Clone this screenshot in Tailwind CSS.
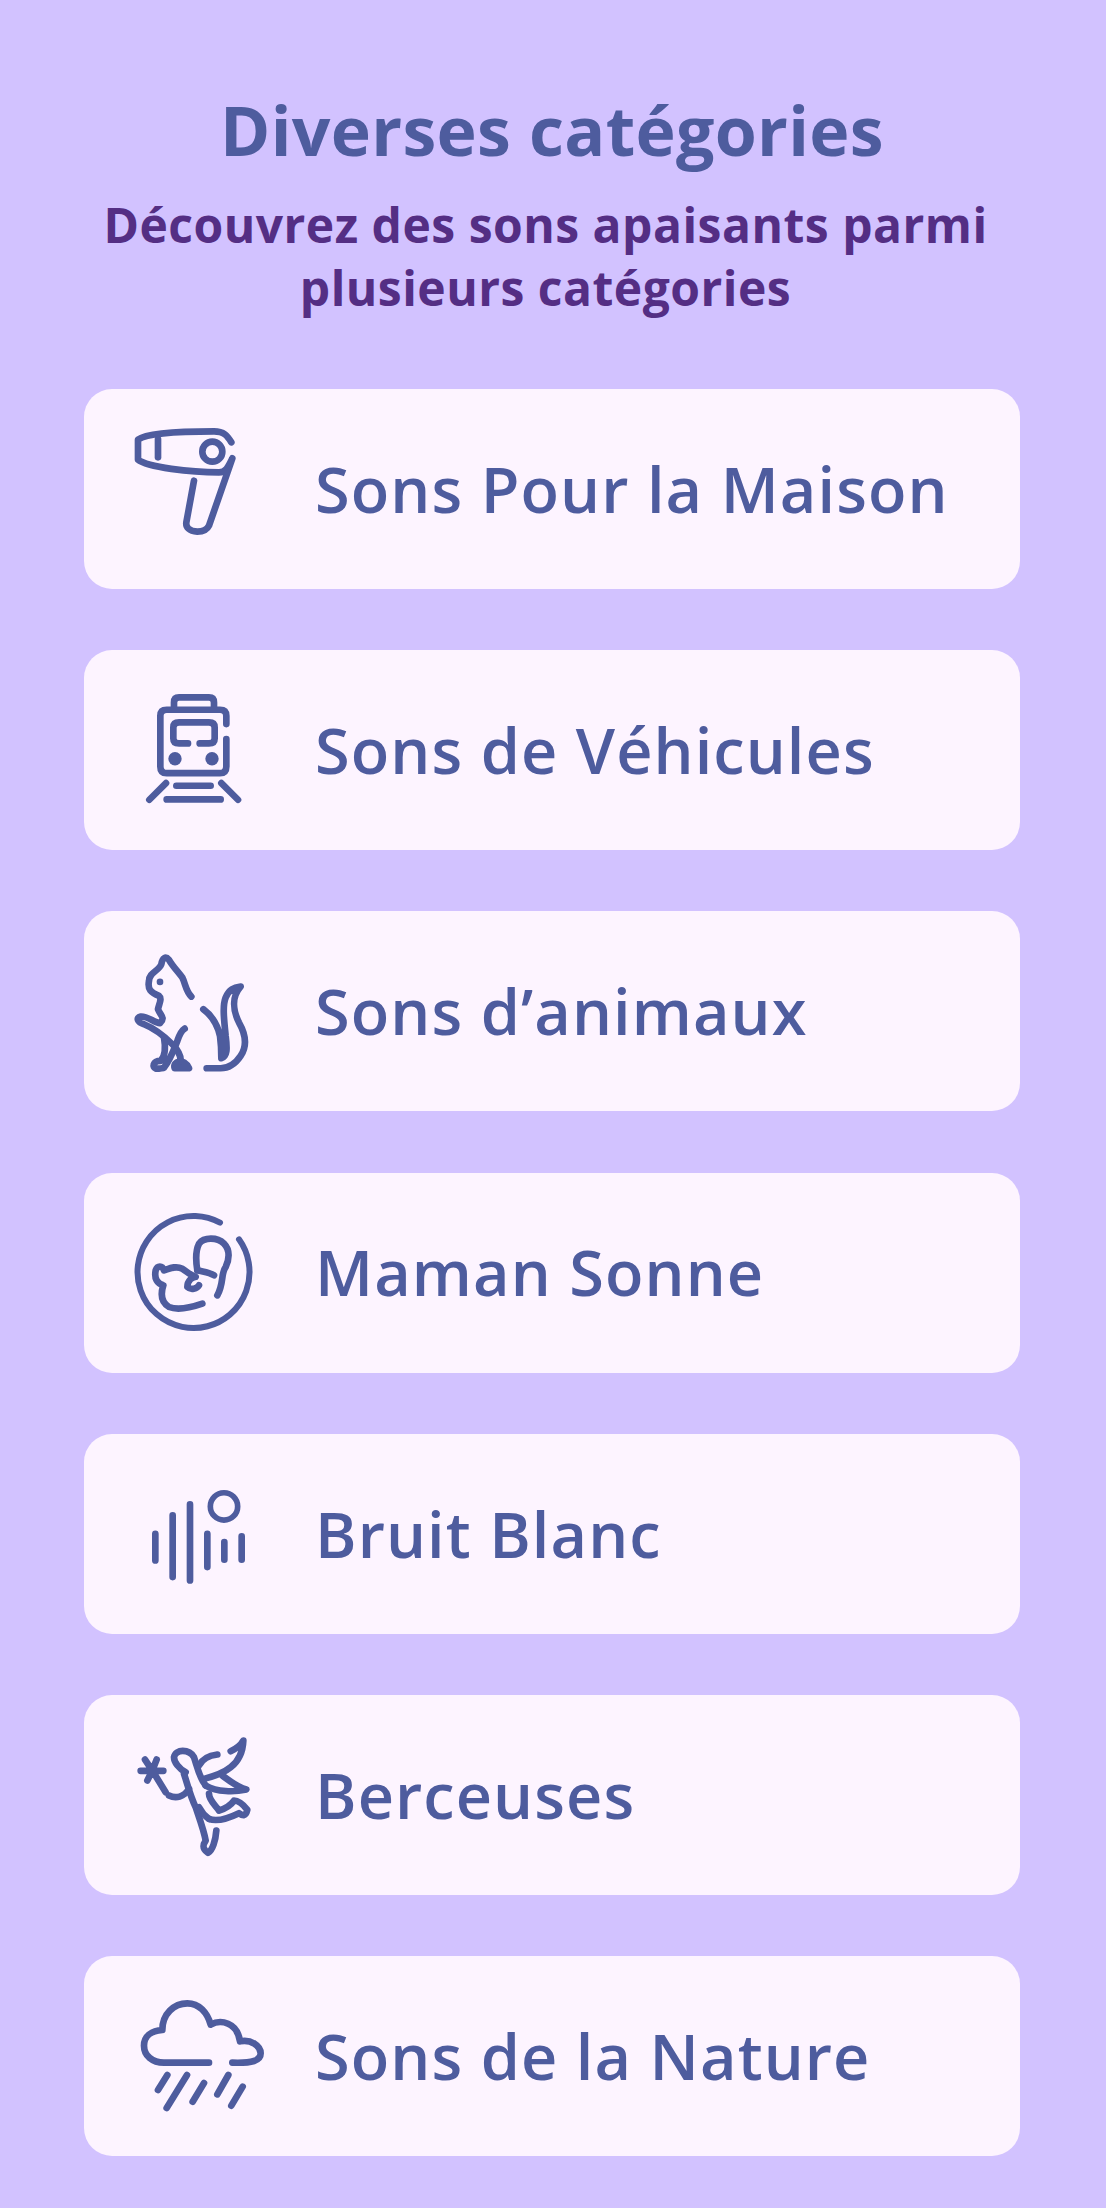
<!DOCTYPE html>
<html lang="fr">
<head>
  <meta charset="UTF-8" />
  <meta name="viewport" content="width=device-width, initial-scale=1.0"/>
  <title>Diverses catégories</title>
  <script src="https://cdn.jsdelivr.net/npm/@tailwindcss/browser@4"></script>
</head>
<body class="bg-[#d2c2ff] font-['Open_Sans',sans-serif] text-[#4e5c9e] h-[2208px] overflow-hidden">
  <main class="pl-[84px] pr-[86px] pt-[90px]">
    <!-- Heading -->
    <h1 class="text-center text-[68px] leading-[80px] font-bold tracking-[0.3px]">Diverses catégories</h1>
    <h2 class="mt-[23px] pr-[13px] text-center text-[48px] leading-[63px] font-bold tracking-[0.5px] text-[#542e84]">Découvrez des sons apaisants parmi<br>plusieurs catégories</h2>

    <!-- Categories -->
    <div class="mt-[70px] flex flex-col gap-[61.2px]">

      <a class="h-[200px] rounded-[28px] bg-[#fdf4ff] flex items-center pl-[36px] gap-[65px]">
        <svg class="w-[130px] h-[130px] shrink-0 overflow-visible" viewBox="108 105 390 390" fill="none" stroke="currentColor" stroke-width="20" stroke-linecap="round" stroke-linejoin="round">
          <path d="M442,160 C430,140 420,127 390,127 C320,127 190,130 162,152 V212 C190,235 320,250 405,250 C425,250 432,235 445,208 L375,410 C368,425 355,428 340,428 C315,426 305,415 307,400 L330,275"/>
          <path d="M222,150 V205"/>
          <circle cx="385" cy="188" r="30"/>
        </svg>
        <span class="text-[63px] font-semibold tracking-[1.1px] whitespace-nowrap">Sons Pour la Maison</span>
      </a>

      <a class="h-[200px] rounded-[28px] bg-[#fdf4ff] flex items-center pl-[36px] gap-[65px]">
        <svg class="w-[130px] h-[130px] shrink-0 overflow-visible" viewBox="108 107.7 390 390" fill="none" stroke="currentColor" stroke-width="20" stroke-linecap="round" stroke-linejoin="round">
          <path d="M270,175 V160 Q270,145 285,145 H375 Q390,145 390,160 V175"/>
          <path d="M427,225 V200 Q427,182 408,182 H248 Q229,182 229,200 V352 Q229,372 248,372 H408 Q427,372 427,352 V270"/>
          <path d="M312,283 H285 Q268,283 268,268 V235 Q268,220 285,220 H375 Q392,220 392,235 V268 Q392,283 375,283 H347"/>
          <circle cx="273" cy="329" r="20" fill="currentColor" stroke="none"/>
          <circle cx="384" cy="329" r="20" fill="currentColor" stroke="none"/>
          <path d="M196,452 L246,402 M277,410 H380 M248,451 H410 M412,402 L462,452"/>
        </svg>
        <span class="text-[63px] font-semibold tracking-[1.1px] whitespace-nowrap">Sons de Véhicules</span>
      </a>

      <a class="h-[200px] rounded-[28px] bg-[#fdf4ff] flex items-center pl-[36px] gap-[65px]">
        <svg class="w-[130px] h-[130px] shrink-0 overflow-visible" viewBox="108 110.3 390 390" fill="none" stroke="currentColor" stroke-width="20" stroke-linecap="round" stroke-linejoin="round">
          <path d="M322,262 C305,245 305,225 295,205 C280,185 265,170 255,152 C245,140 235,145 232,165 C225,185 195,190 195,215 C190,240 200,250 225,260 C235,268 225,285 222,300 C230,320 245,325 228,342 C210,340 190,320 170,322 C155,325 160,340 180,345 C205,355 240,380 265,405 C280,420 290,440 290,452"/>
          <path d="M240,385 C245,415 245,440 230,455 C205,455 205,475 215,478 C225,478 235,478 240,475 C260,450 270,420 280,395 C285,380 290,365 302,358"/>
          <path d="M272,477 C265,455 300,445 315,477 Z" fill="currentColor"/>
          <path d="M358,300 C385,320 400,345 408,380 C412,410 412,430 412,447 C430,440 430,420 425,380 C420,330 415,290 425,265 C435,240 450,235 470,232 C445,260 445,300 465,340 C485,375 490,410 470,440 C450,470 430,477 410,477 H368"/>
          <circle cx="228" cy="218" r="10" fill="currentColor" stroke="none"/>
        </svg>
        <span class="text-[63px] font-semibold tracking-[1.1px] whitespace-nowrap">Sons d’animaux</span>
      </a>

      <a class="h-[200px] rounded-[28px] bg-[#fdf4ff] flex items-center pl-[36px] gap-[65px]">
        <svg class="w-[130px] h-[130px] shrink-0 overflow-visible" viewBox="108 113 390 390" fill="none" stroke="currentColor" stroke-width="20" stroke-linecap="round" stroke-linejoin="round">
          <path d="M465,207 A168,168 0 1 1 408,157" stroke-width="18"/>
          <path d="M340,300 C335,270 335,240 345,220 C360,200 400,200 420,220 C440,240 435,270 425,290 C410,310 420,340 400,375"/>
          <path d="M340,300 C360,305 375,305 390,315"/>
          <path d="M355,400 C320,412 280,420 255,410 C230,395 230,370 238,345 C220,340 210,325 215,300 C220,285 235,285 240,300 C255,295 275,285 295,295 C310,305 320,315 335,320 C325,320 310,330 310,350 C320,360 340,355 345,345"/>
        </svg>
        <span class="text-[63px] font-semibold tracking-[1.1px] whitespace-nowrap">Maman Sonne</span>
      </a>

      <a class="h-[200px] rounded-[28px] bg-[#fdf4ff] flex items-center pl-[36px] gap-[65px]">
        <svg class="w-[130px] h-[130px] shrink-0 overflow-visible" viewBox="108 115.7 390 390" fill="none" stroke="currentColor" stroke-width="20" stroke-linecap="round">
          <path d="M214,310 V390 M266,255 V440 M318,222 V450 M370,310 V410 M421,335 V388 M473,318 V388"/>
          <circle cx="420" cy="228" r="41" stroke-width="17"/>
        </svg>
        <span class="text-[63px] font-semibold tracking-[1.1px] whitespace-nowrap">Bruit Blanc</span>
      </a>

      <a class="h-[200px] rounded-[28px] bg-[#fdf4ff] flex items-center pl-[36px] gap-[65px]">
        <svg class="w-[130px] h-[130px] shrink-0 overflow-visible" viewBox="108 118.4 390 390" fill="none" stroke="currentColor" stroke-width="20" stroke-linecap="round" stroke-linejoin="round">
          <path d="M170,241 H238 M183,207 L205,240 M218,207 L205,240 M190,270 L205,240 M205,240 L245,305"/>
          <path d="M255,315 C275,325 300,320 315,295"/>
          <path d="M305,245 C285,235 270,215 270,200 C275,175 315,175 330,200 C340,230 345,260 365,285"/>
          <path d="M345,225 C355,205 375,195 400,192"/>
          <path d="M360,265 C420,250 475,225 478,150 C470,165 455,175 440,182"/>
          <path d="M415,255 C435,270 460,290 487,297 C450,305 400,305 365,285"/>
          <path d="M375,310 C375,330 395,345 405,360 C420,355 440,345 450,330 C465,330 480,345 490,358 C485,380 475,375 465,368 C430,385 400,395 375,385"/>
          <path d="M300,250 C310,280 320,320 335,350 C345,380 360,420 365,450 C355,465 355,475 372,487 C385,480 395,450 397,420"/>
          <path d="M345,350 C355,370 365,378 375,385"/>
        </svg>
        <span class="text-[63px] font-semibold tracking-[1.1px] whitespace-nowrap">Berceuses</span>
      </a>

      <a class="h-[200px] rounded-[28px] bg-[#fdf4ff] flex items-center pl-[36px] gap-[65px]">
        <svg class="w-[130px] h-[130px] shrink-0 overflow-visible" viewBox="108 121 390 390" fill="none" stroke="currentColor" stroke-width="20" stroke-linecap="round" stroke-linejoin="round">
          <path d="M375,336 H240 C205,336 180,315 180,285 C180,255 205,240 235,238 C235,190 270,158 310,158 C345,158 370,185 380,222 C410,205 460,215 468,272 C500,265 530,285 530,308 C530,330 505,338 445,336"/>
          <path d="M250,373 L222,418 M309,373 L248,472 M360,397 L326,453 M433,373 L400,431 M476,408 L442,465"/>
        </svg>
        <span class="text-[63px] font-semibold tracking-[1.1px] whitespace-nowrap">Sons de la Nature</span>
      </a>

    </div>
  </main>
</body>
</html>
